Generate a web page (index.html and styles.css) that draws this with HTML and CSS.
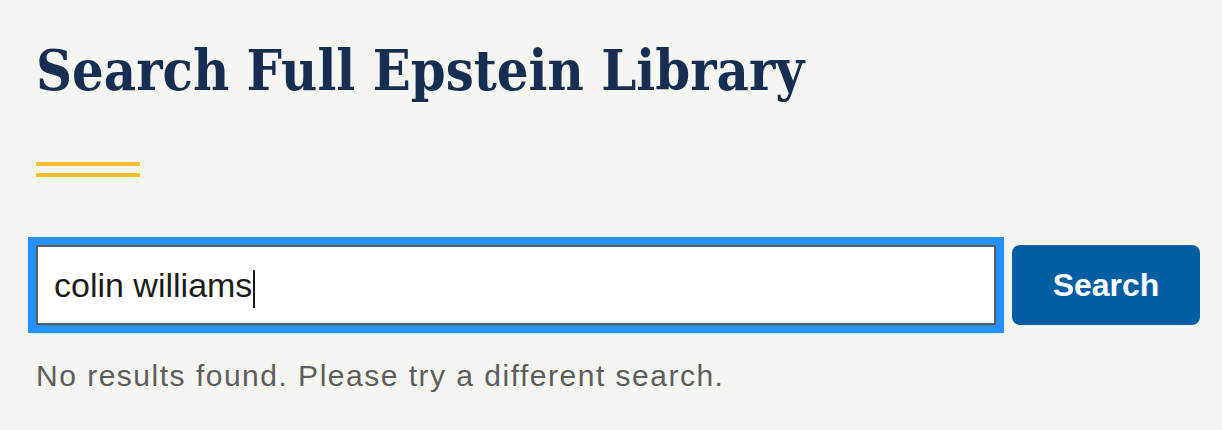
FILE: index.html
```html
<!DOCTYPE html>
<html lang="en">
<head>
<meta charset="utf-8">
<title>Search Full Epstein Library</title>
<link rel="stylesheet" href="styles.css">
</head>
<body>
<main class="page">
  <h1 class="title">Search Full Epstein Library</h1>
  <div class="rule"></div>
  <form class="search" onsubmit="return false">
    <div class="field-wrap">
      <div class="field"><span class="value">colin williams</span><span class="caret"></span></div>
    </div>
    <button class="btn" type="submit">Search</button>
  </form>
  <p class="message">No results found. Please try a different search.</p>
</main>
</body>
</html>
```
FILE: styles.css
```css
html, body {
  margin: 0;
  padding: 0;
  background: #f5f5f1;
}
.page {
  padding: 33px 0 0 36px;
  display: flex;
  flex-direction: column;
  align-items: flex-start;
}
.title {
  margin: 0;
  font-family: "DejaVu Serif Condensed", "DejaVu Serif", serif;
  font-stretch: semi-condensed;
  font-weight: bold;
  font-size: 55.5px;
  line-height: 76px;
  color: #162e51;
  letter-spacing: 0;
}
.rule {
  margin-top: 53px;
  width: 104px;
  height: 7px;
  border-top: 4px solid #ffbe2e;
  border-bottom: 4px solid #ffbe2e;
}
.search {
  margin: 68px 0 0 0;
  display: flex;
  align-items: center;
  gap: 16px;
}
.field-wrap {
  outline: 8px solid #2491ff;
}
.field {
  box-sizing: border-box;
  width: 960px;
  height: 80px;
  border: 2px solid #565c65;
  background: #fff;
  display: flex;
  align-items: center;
  padding-left: 16px;
  font-family: "Liberation Sans", Arial, sans-serif;
  font-size: 34px;
  color: #1b1b1b;
}
.caret {
  display: inline-block;
  width: 2px;
  height: 38px;
  background: #1b1b1b;
  margin-left: 1px;
  margin-top: 8px;
}
.btn {
  width: 188px;
  height: 80px;
  border: 0;
  border-radius: 8px;
  background: #005ea2;
  color: #fff;
  font-family: "Liberation Sans", Arial, sans-serif;
  font-weight: bold;
  font-size: 32px;
  padding: 0;
  margin-left: 0;
}
.message {
  margin: 31px 0 0 0;
  font-family: "Liberation Sans", Arial, sans-serif;
  font-size: 30px;
  line-height: 40px;
  letter-spacing: 1.5px;
  color: #5d5d5d;
}
```
